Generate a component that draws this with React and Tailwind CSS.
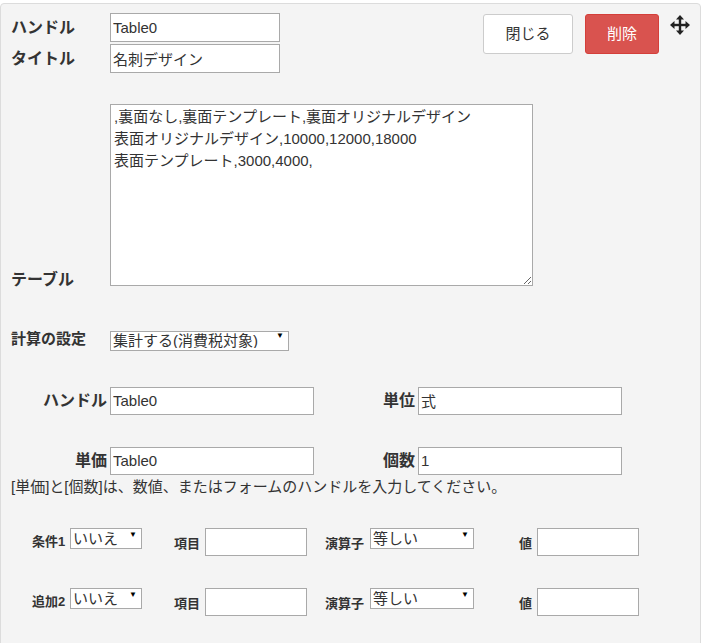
import React from "react";

const jp = { fontFamily: '"Liberation Sans", "Noto Sans CJK JP", sans-serif' };

const Field = ({ value, className }) => (
  <input
    readOnly
    value={value}
    className={`border border-[#a9a9a9] bg-white px-[2px] text-[15px] font-normal text-[#333] outline-none ${className}`}
  />
);

const Select = ({ value, className }) => (
  <div className={`relative ${className}`}>
    <select
      value={value}
      onChange={() => {}}
      className="h-full w-full appearance-none border border-[#a9a9a9] bg-white pl-[2px] text-[15px] font-normal leading-none text-[#333] outline-none"
    >
      <option>{value}</option>
    </select>
    <span className="pointer-events-none absolute right-[5px] top-[1px] text-[8px] text-black">▼</span>
  </div>
);

const MoveIcon = () => (
  <svg width="20" height="20" viewBox="0 0 20 20" fill="#222">
    <rect x="8.8" y="3" width="2.4" height="14" />
    <rect x="3" y="8.8" width="14" height="2.4" />
    <polygon points="10,0 14,4.5 6,4.5" />
    <polygon points="10,20 14,15.5 6,15.5" />
    <polygon points="0,10 4.5,6 4.5,14" />
    <polygon points="20,10 15.5,6 15.5,14" />
  </svg>
);

const CondRow = ({ label }) => (
  <div className="flex items-start text-[13px] font-bold text-[#333]">
    <span className="ml-[21px] mt-[4px] w-[38px]">{label}</span>
    <Select value="いいえ" className="h-[21px] w-[72px]" />
    <span className="ml-[32px] mt-[6px] w-[31px]">項目</span>
    <Field value="" className="h-[28px] w-[102px]" />
    <span className="ml-[18px] mt-[6px] w-[45px]">演算子</span>
    <Select value="等しい" className="h-[21px] w-[104px]" />
    <span className="ml-[45px] mt-[6px] w-[18px]">値</span>
    <Field value="" className="h-[28px] w-[102px]" />
  </div>
);

export default function App() {
  return (
    <div className="bg-white pt-[3px]" style={jp}>
      <div className="h-[660px] w-[701px] rounded-[4px] border border-[#dcdcdc] bg-[#f4f4f4] pl-[10px] pt-[9px] text-[#333]">
        <div className="flex items-start">
          <div className="flex flex-col gap-[2px]">
            <div className="flex items-center">
              <span className="w-[99px] text-[16px] font-bold">ハンドル</span>
              <Field value="Table0" className="h-[29px] w-[170px]" />
            </div>
            <div className="flex items-center">
              <span className="w-[99px] text-[16px] font-bold">タイトル</span>
              <Field value="名刺デザイン" className="h-[29px] w-[170px]" />
            </div>
          </div>
          <button className="ml-[203px] mt-[1px] h-[40px] w-[90px] rounded-[3px] border border-[#ccc] bg-white text-[15px] text-[#333]">
            閉じる
          </button>
          <button className="ml-[12px] mt-[1px] h-[40px] w-[74px] rounded-[3px] border border-[#d43f3a] bg-[#d9534f] text-[15px] text-white">
            削除
          </button>
          <span className="ml-[11px] mt-[2px]">
            <MoveIcon />
          </span>
        </div>

        <div className="mt-[31px] flex items-end">
          <span className="mb-[-6px] w-[99px] text-[16px] font-bold">テーブル</span>
          <textarea
            readOnly
            value={",裏面なし,裏面テンプレート,裏面オリジナルデザイン\n表面オリジナルデザイン,10000,12000,18000\n表面テンプレート,3000,4000,"}
            className="h-[182px] w-[423px] resize border border-[#a9a9a9] bg-white px-[3px] py-[1px] text-[15px] leading-[22px] text-[#333] outline-none"
          />
        </div>

        <div className="mt-[42px] flex items-center">
          <span className="w-[99px] text-[15px] font-bold">計算の設定</span>
          <Select value="集計する(消費税対象)" className="h-[20px] w-[179px]" />
        </div>

        <div className="mt-[36px] flex items-center">
          <span className="w-[99px] pr-[3px] text-right text-[16px] font-bold">ハンドル</span>
          <Field value="Table0" className="h-[28px] w-[204px]" />
          <span className="w-[104px] pr-[3px] text-right text-[16px] font-bold">単位</span>
          <Field value="式" className="h-[28px] w-[204px]" />
        </div>

        <div className="mt-[32px] flex items-center">
          <span className="w-[99px] pr-[3px] text-right text-[16px] font-bold">単価</span>
          <Field value="Table0" className="h-[28px] w-[204px]" />
          <span className="w-[104px] pr-[3px] text-right text-[16px] font-bold">個数</span>
          <Field value="1" className="h-[28px] w-[204px]" />
        </div>

        <p className="mt-[1px] text-[15px] text-[#333]">
          [単価]と[個数]は、数値、またはフォームのハンドルを入力してください。
        </p>

        <div className="mt-[30px] flex flex-col gap-[32px]">
          <CondRow label="条件1" />
          <CondRow label="追加2" />
        </div>
      </div>
    </div>
  );
}
